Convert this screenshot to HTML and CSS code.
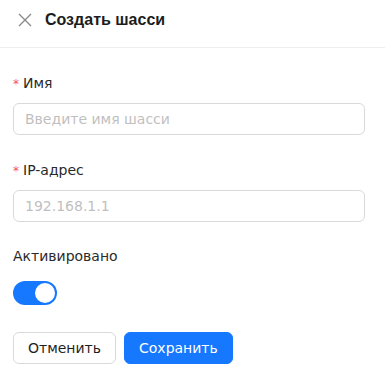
FILE: index.html
```html
<!DOCTYPE html>
<html>
<head>
<meta charset="utf-8">
<link rel="stylesheet" href="styles.css">
</head>
<body>
<div class="drawer">
  <div class="header">
    <svg class="close" width="14" height="14" viewBox="0 0 14 14"><path d="M1 1L13 13M13 1L1 13" stroke="#8a8a8a" stroke-width="1.4" fill="none"/></svg>
    <span class="title">Создать шасси</span>
  </div>
  <div class="body">
    <div class="field">
      <div class="label"><span class="req">*</span>Имя</div>
      <input class="input" placeholder="Введите имя шасси">
    </div>
    <div class="field">
      <div class="label"><span class="req">*</span>IP-адрес</div>
      <input class="input" placeholder="192.168.1.1">
    </div>
    <div class="field field-switch">
      <div class="label">Активировано</div>
      <div class="switch"><span class="knob"></span></div>
    </div>
    <div class="actions">
      <button class="btn btn-default">Отменить</button>
      <button class="btn btn-primary">Сохранить</button>
    </div>
  </div>
</div>
</body>
</html>
```
FILE: styles.css
```css
* { box-sizing: border-box; }
html, body { margin: 0; padding: 0; background: #fff; }
body { font-family: "DejaVu Sans", sans-serif; font-size: 14px; color: #1f1f1f; }
.drawer { width: 385px; }
.header {
  display: flex; align-items: center; gap: 13px;
  height: 48px; padding: 0 18px 8px;
  border-bottom: 1px solid #eeeeee;
}
.close { flex: none; }
.title { font-family: "Liberation Sans", Arial, sans-serif; font-weight: bold; font-size: 16px; color: #1c1c1c; }
.body { padding: 24px 20px 0 13px; }
.field { margin-bottom: 24px; }
.field-switch { margin-top: -1px; margin-bottom: 27px; }
.label { font-size: 14px; line-height: 22px; margin-bottom: 8px; color: #2a2a2a; }
.field-switch .label { margin-bottom: 14px; }
.req { color: #f5554a; margin-right: 4px; font-size: 12px; }
.input {
  display: block; width: 352px; height: 32px;
  border: 1px solid #d9d9d9; border-radius: 6px;
  padding: 0 11px; font-family: inherit; font-size: 14px; outline: none;
}
.input::placeholder { color: #bfbfbf; }
.switch {
  width: 44px; height: 24px; border-radius: 12px; background: #1677ff;
  position: relative;
}
.knob {
  position: absolute; top: 2px; right: 2px; width: 20px; height: 20px;
  border-radius: 50%; background: #fff;
}
.actions { display: flex; gap: 8px; }
.btn {
  height: 32px; border-radius: 6px; padding: 0 14px;
  font-family: inherit; font-size: 14px; cursor: pointer;
}
.btn-default { background: #fff; border: 1px solid #d9d9d9; color: #1f1f1f; }
.btn-primary { background: #1677ff; border: 1px solid #1677ff; color: #fff; }
```
